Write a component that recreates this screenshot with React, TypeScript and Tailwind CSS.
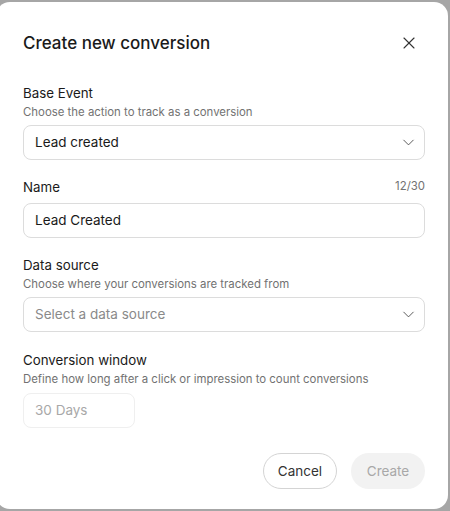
import { ChevronDown, X } from "lucide-react";

function Label({ children }: { children: React.ReactNode }) {
  return <div className="text-[13.3px] leading-5 text-[#1a1a1a]">{children}</div>;
}

function Hint({ children }: { children: React.ReactNode }) {
  return <div className="mt-[1px] text-[11.4px] leading-4 text-[#727272]">{children}</div>;
}

export default function App() {
  return (
    <div
      className="h-[511px] w-[450px] overflow-hidden bg-[#a6a6a6] pt-[2px]"
      style={{ fontFamily: "Inter, 'Noto Sans', sans-serif" }}
    >
      <div className="-ml-[4px] h-[507px] w-[452px] rounded-[14px] bg-white pl-[27px] pr-[23px] pt-[29px]">
        {/* Header */}
        <div className="flex items-center justify-between">
          <h1 className="text-[17px] font-medium leading-6 text-[#1a1a1a]">Create new conversion</h1>
          <X className="mr-[6px] h-[20px] w-[20px] text-[#333]" strokeWidth={1.3} />
        </div>

        {/* Base event */}
        <div className="mt-[28px]">
          <Label>Base Event</Label>
          <Hint>Choose the action to track as a conversion</Hint>
          <div className="mt-[5px] flex h-[35px] items-center justify-between rounded-[8px] border border-[#dcdcdc] pl-[11px] pr-[6px]">
            <span className="text-[13.5px] text-[#1a1a1a]">Lead created</span>
            <ChevronDown className="h-[19px] w-[19px] text-[#444]" strokeWidth={1.1} />
          </div>
        </div>

        {/* Name */}
        <div className="mt-[17px]">
          <div className="flex items-center justify-between">
            <Label>Name</Label>
            <span className="text-[11.4px] text-[#727272]">12/30</span>
          </div>
          <div className="mt-[6px] flex h-[35px] items-center rounded-[8px] border border-[#dcdcdc] px-[11px]">
            <span className="text-[13.5px] text-[#1a1a1a]">Lead Created</span>
          </div>
        </div>

        {/* Data source */}
        <div className="mt-[17px]">
          <Label>Data source</Label>
          <Hint>Choose where your conversions are tracked from</Hint>
          <div className="mt-[5px] flex h-[35px] items-center justify-between rounded-[8px] border border-[#dcdcdc] pl-[11px] pr-[6px]">
            <span className="text-[13.5px] text-[#8a8a8a]">Select a data source</span>
            <ChevronDown className="h-[19px] w-[19px] text-[#444]" strokeWidth={1.1} />
          </div>
        </div>

        {/* Conversion window */}
        <div className="mt-[18px]">
          <Label>Conversion window</Label>
          <Hint>Define how long after a click or impression to count conversions</Hint>
          <div className="mt-[6px] flex h-[35px] w-[112px] items-center rounded-[8px] border border-[#efefef] px-[11px]">
            <span className="text-[13.5px] text-[#a8a8a8]">30 Days</span>
          </div>
        </div>

        {/* Footer */}
        <div className="mt-[25px] flex justify-end gap-[14px]">
          <button className="h-[36px] w-[74px] rounded-full border border-[#d4d4d4] text-[13.5px] text-[#333]">
            Cancel
          </button>
          <button className="h-[36px] w-[74px] rounded-full bg-[#f2f2f2] text-[13.5px] text-[#a8a8a8]">
            Create
          </button>
        </div>
      </div>
    </div>
  );
}
